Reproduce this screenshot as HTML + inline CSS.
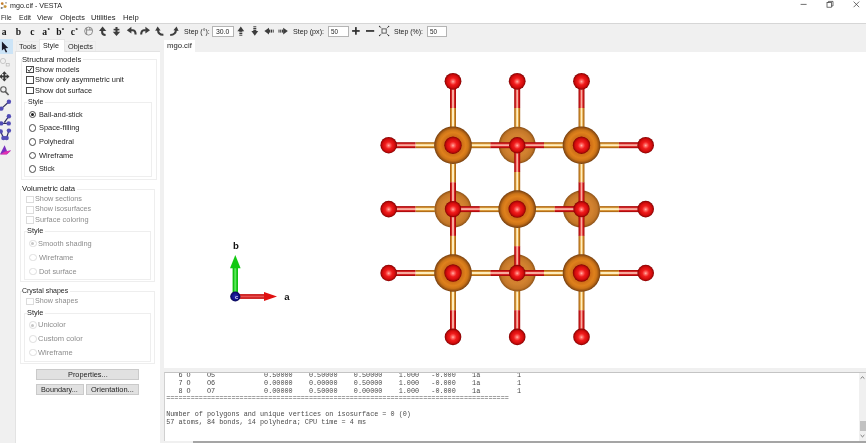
<!DOCTYPE html>
<html><head><meta charset="utf-8"><title>mgo.cif - VESTA</title>
<style>
html,body{margin:0;padding:0;background:#fff;}
body{width:866px;height:443px;overflow:hidden;position:relative;font-family:"Liberation Sans",sans-serif;}
.a{position:absolute;}
.t{position:absolute;white-space:pre;line-height:1;transform-origin:0 50%;}
.cb{position:absolute;width:5.6px;height:5.6px;border:0.7px solid #4a4a4a;background:#fff;}
.cbd{position:absolute;width:5.6px;height:5.6px;border:0.7px solid #dcdcdc;background:#fff;}
.rb{position:absolute;width:5.6px;height:5.6px;border:0.7px solid #4a4a4a;border-radius:50%;background:#fff;}
.rbd{position:absolute;width:5.6px;height:5.6px;border:0.7px solid #dedede;border-radius:50%;background:#fff;}
.gb{position:absolute;border:1px solid #eeeeee;box-sizing:border-box;}
.btn{position:absolute;box-sizing:border-box;background:#e1e1e1;border:1px solid #cacaca;}
.inp{position:absolute;box-sizing:border-box;background:#fff;border:1px solid #b4b4b4;}
.mono{position:absolute;white-space:pre;font-family:"Liberation Mono",monospace;font-size:6.8px;line-height:7.76px;color:#4a4a4a;}
</style></head><body>
<div class="a" style="left:0;top:0;width:866px;height:443px;will-change:transform;">
<!-- window chrome -->
<div class="a" style="left:0;top:0;width:866px;height:443px;background:#f0f0f0;"></div>
<div class="a" style="left:0;top:0;width:866px;height:23px;background:#fff;"></div>
<div class="a" style="left:0;top:23px;width:866px;height:1px;background:#d6d6d6;"></div>
<!-- left tool strip highlight -->
<div class="a" style="left:0;top:39.2px;width:12.8px;height:14.8px;background:#cce4f7;"></div>
<!-- side panel -->
<div class="a" style="left:14.5px;top:51px;width:145.5px;height:392px;background:#fff;border-left:1px solid #e3e3e3;border-top:1px solid #e3e3e3;box-sizing:border-box;"></div>
<div class="a" style="left:38.8px;top:39.2px;width:26.4px;height:12.8px;background:#fff;border:1px solid #e6e6e6;border-bottom:none;box-sizing:border-box;"></div>
<div class="a" style="left:15.5px;top:41px;width:24px;height:10px;border:1px solid #ebebeb;border-bottom:none;border-right:none;box-sizing:border-box;"></div>
<div class="a" style="left:65px;top:41px;width:30.5px;height:10px;border:1px solid #ebebeb;border-bottom:none;border-left:none;box-sizing:border-box;"></div>
<!-- group boxes -->
<div class="gb" style="left:20.5px;top:59px;width:136.5px;height:120.5px;"></div>
<div class="gb" style="left:24px;top:101.5px;width:128px;height:75.5px;"></div>
<div class="gb" style="left:20px;top:188.5px;width:134.5px;height:93.5px;"></div>
<div class="gb" style="left:23.5px;top:230.5px;width:127.5px;height:49px;"></div>
<div class="gb" style="left:20px;top:291px;width:134.5px;height:73px;"></div>
<div class="gb" style="left:23.5px;top:312.5px;width:127.5px;height:49px;"></div>
<!-- label backgrounds to break group borders -->
<div class="a" style="left:21.5px;top:55px;width:61px;height:8px;background:#fff;"></div>
<div class="a" style="left:26.5px;top:98px;width:18px;height:8px;background:#fff;"></div>
<div class="a" style="left:21.5px;top:184px;width:55px;height:8px;background:#fff;"></div>
<div class="a" style="left:26.5px;top:227px;width:18px;height:8px;background:#fff;"></div>
<div class="a" style="left:21.5px;top:287px;width:48px;height:8px;background:#fff;"></div>
<div class="a" style="left:26.5px;top:309px;width:18px;height:8px;background:#fff;"></div>
<!-- checkboxes -->
<div class="cb" style="left:26.3px;top:65.8px;"></div>
<div class="cb" style="left:26.3px;top:76.4px;"></div>
<div class="cb" style="left:26.3px;top:86.8px;"></div>
<div class="cbd" style="left:26.3px;top:195.6px;"></div>
<div class="cbd" style="left:26.3px;top:206px;"></div>
<div class="cbd" style="left:26.3px;top:216.2px;"></div>
<div class="cbd" style="left:26.3px;top:297.6px;"></div>
<!-- radios -->
<div class="rb" style="left:28.8px;top:110.9px;"></div>
<div class="rb" style="left:28.8px;top:124.1px;"></div>
<div class="rb" style="left:28.8px;top:138px;"></div>
<div class="rb" style="left:28.8px;top:151.7px;"></div>
<div class="rb" style="left:28.8px;top:165.2px;"></div>
<div class="a" style="left:30.8px;top:112.9px;width:3.6px;height:3.6px;border-radius:50%;background:#1c1c1c;"></div>
<div class="rbd" style="left:29px;top:239.8px;"></div>
<div class="rbd" style="left:29px;top:253.7px;"></div>
<div class="rbd" style="left:29px;top:267.7px;"></div>
<div class="a" style="left:31.2px;top:242px;width:3.2px;height:3.2px;border-radius:50%;background:#c6c6c6;"></div>
<div class="rbd" style="left:29px;top:321.3px;"></div>
<div class="rbd" style="left:29px;top:335.2px;"></div>
<div class="rbd" style="left:29px;top:348.7px;"></div>
<div class="a" style="left:31.2px;top:323.5px;width:3.2px;height:3.2px;border-radius:50%;background:#c6c6c6;"></div>
<!-- buttons -->
<div class="btn" style="left:36.4px;top:368.5px;width:102.4px;height:11.4px;"></div>
<div class="btn" style="left:36.4px;top:383.6px;width:47.4px;height:11.6px;"></div>
<div class="btn" style="left:85.6px;top:383.6px;width:53.2px;height:11.6px;"></div>
<!-- toolbar inputs -->
<div class="inp" style="left:212px;top:25.5px;width:21.5px;height:11.8px;"></div>
<div class="inp" style="left:328px;top:25.5px;width:20.8px;height:11.8px;"></div>
<div class="inp" style="left:426.5px;top:25.5px;width:20.8px;height:11.8px;"></div>
<!-- canvas tab + canvas -->
<div class="a" style="left:163.7px;top:39.8px;width:31.2px;height:12px;background:#fff;"></div>
<div class="a" style="left:163.7px;top:51.5px;width:703px;height:316.4px;background:#fff;"></div>
<!-- text area -->
<div class="a" style="left:164px;top:372.3px;width:702px;height:68.5px;background:#fff;border-top:1px solid #c4c4c4;border-left:1px solid #d0d0d0;box-sizing:border-box;"></div>
<div class="a" style="left:859px;top:373.3px;width:7px;height:67.5px;background:#f0f0f0;"></div>
<div class="a" style="left:859.5px;top:421px;width:6.5px;height:10px;background:#c1c1c1;"></div>
<div class="a" style="left:193px;top:441px;width:673px;height:2px;background:#a5a5a5;"></div>
<div class="mono" style="left:166.2px;top:372.2px;">   6 O    O5            0.50000    0.50000    0.50000    1.000   -0.000    1a         1
   7 O    O6            0.00000    0.00000    0.50000    1.000   -0.000    1a         1
   8 O    O7            0.00000    0.50000    0.00000    1.000   -0.000    1a         1
====================================================================================

Number of polygons and unique vertices on isosurface = 0 (0)
57 atoms, 84 bonds, 14 polyhedra; CPU time = 4 ms</div>
<!-- cover top half of first row (scrolled) -->
<div class="a" style="left:165.5px;top:368px;width:693px;height:4.3px;background:#f0f0f0;"></div>
<div class="a" style="left:164.5px;top:372.3px;width:694.5px;height:0.8px;background:#c4c4c4;"></div>
<span class="t" style="left:9.6px;top:1.9px;font-size:7.6px;color:#1c1c1c;font-family:'Liberation Sans', sans-serif;font-weight:normal;transform:scaleX(0.9377)">mgo.cif - VESTA</span>
<span class="t" style="left:0.8px;top:14.0px;font-size:7.6px;color:#1c1c1c;font-family:'Liberation Sans', sans-serif;font-weight:normal;transform:scaleX(0.8653)">File</span>
<span class="t" style="left:18.5px;top:14.0px;font-size:7.6px;color:#1c1c1c;font-family:'Liberation Sans', sans-serif;font-weight:normal;transform:scaleX(0.9165)">Edit</span>
<span class="t" style="left:37.3px;top:14.0px;font-size:7.6px;color:#1c1c1c;font-family:'Liberation Sans', sans-serif;font-weight:normal;transform:scaleX(0.9493)">View</span>
<span class="t" style="left:59.7px;top:14.0px;font-size:7.6px;color:#1c1c1c;font-family:'Liberation Sans', sans-serif;font-weight:normal;transform:scaleX(0.9631)">Objects</span>
<span class="t" style="left:91.4px;top:14.0px;font-size:7.6px;color:#1c1c1c;font-family:'Liberation Sans', sans-serif;font-weight:normal;transform:scaleX(1.0047)">Utilities</span>
<span class="t" style="left:122.9px;top:14.0px;font-size:7.6px;color:#1c1c1c;font-family:'Liberation Sans', sans-serif;font-weight:normal;transform:scaleX(1.0048)">Help</span>
<span class="t" style="left:183.6px;top:27.5px;font-size:7.6px;color:#1c1c1c;font-family:'Liberation Sans', sans-serif;font-weight:normal;transform:scaleX(0.9235)">Step (°):</span>
<span class="t" style="left:215.6px;top:27.5px;font-size:7.6px;color:#1c1c1c;font-family:'Liberation Sans', sans-serif;font-weight:normal;transform:scaleX(0.9066)">30.0</span>
<span class="t" style="left:293.0px;top:27.5px;font-size:7.6px;color:#1c1c1c;font-family:'Liberation Sans', sans-serif;font-weight:normal;transform:scaleX(0.9416)">Step (px):</span>
<span class="t" style="left:331.0px;top:27.5px;font-size:7.6px;color:#1c1c1c;font-family:'Liberation Sans', sans-serif;font-weight:normal;transform:scaleX(0.8281)">50</span>
<span class="t" style="left:394.3px;top:27.5px;font-size:7.6px;color:#1c1c1c;font-family:'Liberation Sans', sans-serif;font-weight:normal;transform:scaleX(0.9161)">Step (%):</span>
<span class="t" style="left:429.7px;top:27.5px;font-size:7.6px;color:#1c1c1c;font-family:'Liberation Sans', sans-serif;font-weight:normal;transform:scaleX(0.8281)">50</span>
<span class="t" style="left:166.6px;top:41.9px;font-size:7.6px;color:#1c1c1c;font-family:'Liberation Sans', sans-serif;font-weight:normal;transform:scaleX(1.0129)">mgo.cif</span>
<span class="t" style="left:18.5px;top:42.5px;font-size:7.6px;color:#1c1c1c;font-family:'Liberation Sans', sans-serif;font-weight:normal;transform:scaleX(0.9755)">Tools</span>
<span class="t" style="left:42.7px;top:41.8px;font-size:7.6px;color:#1c1c1c;font-family:'Liberation Sans', sans-serif;font-weight:normal;transform:scaleX(0.9414)">Style</span>
<span class="t" style="left:67.6px;top:42.5px;font-size:7.6px;color:#1c1c1c;font-family:'Liberation Sans', sans-serif;font-weight:normal;transform:scaleX(0.9631)">Objects</span>
<span class="t" style="left:22.4px;top:55.5px;font-size:7.6px;color:#1c1c1c;font-family:'Liberation Sans', sans-serif;font-weight:normal;transform:scaleX(1.0018)">Structural models</span>
<span class="t" style="left:35.0px;top:65.5px;font-size:7.6px;color:#1c1c1c;font-family:'Liberation Sans', sans-serif;font-weight:normal;transform:scaleX(0.9738)">Show models</span>
<span class="t" style="left:35.0px;top:76.2px;font-size:7.6px;color:#1c1c1c;font-family:'Liberation Sans', sans-serif;font-weight:normal;transform:scaleX(0.9831)">Show only asymmetric unit</span>
<span class="t" style="left:35.0px;top:86.5px;font-size:7.6px;color:#1c1c1c;font-family:'Liberation Sans', sans-serif;font-weight:normal;transform:scaleX(0.9712)">Show dot surface</span>
<span class="t" style="left:27.8px;top:97.8px;font-size:7.6px;color:#1c1c1c;font-family:'Liberation Sans', sans-serif;font-weight:normal;transform:scaleX(0.9177)">Style</span>
<span class="t" style="left:38.6px;top:110.6px;font-size:7.6px;color:#1c1c1c;font-family:'Liberation Sans', sans-serif;font-weight:normal;transform:scaleX(0.9588)">Ball-and-stick</span>
<span class="t" style="left:38.6px;top:124.3px;font-size:7.6px;color:#1c1c1c;font-family:'Liberation Sans', sans-serif;font-weight:normal;transform:scaleX(0.9764)">Space-filling</span>
<span class="t" style="left:38.6px;top:137.7px;font-size:7.6px;color:#1c1c1c;font-family:'Liberation Sans', sans-serif;font-weight:normal;transform:scaleX(0.9724)">Polyhedral</span>
<span class="t" style="left:38.6px;top:152.1px;font-size:7.6px;color:#1c1c1c;font-family:'Liberation Sans', sans-serif;font-weight:normal;transform:scaleX(0.9820)">Wireframe</span>
<span class="t" style="left:38.6px;top:165.4px;font-size:7.6px;color:#1c1c1c;font-family:'Liberation Sans', sans-serif;font-weight:normal;transform:scaleX(0.9533)">Stick</span>
<span class="t" style="left:22.4px;top:185.1px;font-size:7.6px;color:#1c1c1c;font-family:'Liberation Sans', sans-serif;font-weight:normal;transform:scaleX(1.0144)">Volumetric data</span>
<span class="t" style="left:35.0px;top:195.3px;font-size:7.6px;color:#8c8c8c;font-family:'Liberation Sans', sans-serif;font-weight:normal;transform:scaleX(0.9598)">Show sections</span>
<span class="t" style="left:35.0px;top:205.3px;font-size:7.6px;color:#8c8c8c;font-family:'Liberation Sans', sans-serif;font-weight:normal;transform:scaleX(0.9409)">Show isosurfaces</span>
<span class="t" style="left:35.0px;top:216.0px;font-size:7.6px;color:#8c8c8c;font-family:'Liberation Sans', sans-serif;font-weight:normal;transform:scaleX(0.9749)">Surface coloring</span>
<span class="t" style="left:27.3px;top:227.3px;font-size:7.6px;color:#1c1c1c;font-family:'Liberation Sans', sans-serif;font-weight:normal;transform:scaleX(0.9710)">Style</span>
<span class="t" style="left:38.3px;top:240.0px;font-size:7.6px;color:#8c8c8c;font-family:'Liberation Sans', sans-serif;font-weight:normal;transform:scaleX(0.9783)">Smooth shading</span>
<span class="t" style="left:38.5px;top:254.3px;font-size:7.6px;color:#8c8c8c;font-family:'Liberation Sans', sans-serif;font-weight:normal;transform:scaleX(0.9848)">Wireframe</span>
<span class="t" style="left:38.5px;top:268.1px;font-size:7.6px;color:#8c8c8c;font-family:'Liberation Sans', sans-serif;font-weight:normal;transform:scaleX(0.9654)">Dot surface</span>
<span class="t" style="left:22.4px;top:287.0px;font-size:7.6px;color:#1c1c1c;font-family:'Liberation Sans', sans-serif;font-weight:normal;transform:scaleX(0.9197)">Crystal shapes</span>
<span class="t" style="left:35.0px;top:297.1px;font-size:7.6px;color:#8c8c8c;font-family:'Liberation Sans', sans-serif;font-weight:normal;transform:scaleX(0.9431)">Show shapes</span>
<span class="t" style="left:27.3px;top:308.6px;font-size:7.6px;color:#1c1c1c;font-family:'Liberation Sans', sans-serif;font-weight:normal;transform:scaleX(0.9710)">Style</span>
<span class="t" style="left:38.3px;top:321.4px;font-size:7.6px;color:#8c8c8c;font-family:'Liberation Sans', sans-serif;font-weight:normal;transform:scaleX(0.9943)">Unicolor</span>
<span class="t" style="left:38.3px;top:335.3px;font-size:7.6px;color:#8c8c8c;font-family:'Liberation Sans', sans-serif;font-weight:normal;transform:scaleX(0.9992)">Custom color</span>
<span class="t" style="left:38.3px;top:348.9px;font-size:7.6px;color:#8c8c8c;font-family:'Liberation Sans', sans-serif;font-weight:normal;transform:scaleX(0.9905)">Wireframe</span>
<span class="t" style="left:67.6px;top:370.5px;font-size:7.6px;color:#1c1c1c;font-family:'Liberation Sans', sans-serif;font-weight:normal;transform:scaleX(0.9694)">Properties...</span>
<span class="t" style="left:41.4px;top:386.0px;font-size:7.6px;color:#1c1c1c;font-family:'Liberation Sans', sans-serif;font-weight:normal;transform:scaleX(0.9613)">Boundary...</span>
<span class="t" style="left:90.7px;top:386.0px;font-size:7.6px;color:#1c1c1c;font-family:'Liberation Sans', sans-serif;font-weight:normal;transform:scaleX(0.9843)">Orientation...</span>
<svg class="a" style="left:0;top:0" width="866" height="443" viewBox="0 0 866 443">
<defs>
<radialGradient id="gMg" cx="50%" cy="50%" r="50%">
<stop offset="0" stop-color="#c8661a"/><stop offset="0.5" stop-color="#d07018"/><stop offset="0.68" stop-color="#df811c"/><stop offset="0.82" stop-color="#cc7418"/><stop offset="0.93" stop-color="#9a5412"/><stop offset="1" stop-color="#6e3a0c"/></radialGradient>
<radialGradient id="gMgB" cx="50%" cy="50%" r="50%">
<stop offset="0" stop-color="#d07e2c"/><stop offset="0.6" stop-color="#d28230"/><stop offset="0.85" stop-color="#c27628"/><stop offset="0.95" stop-color="#a05e1c"/><stop offset="1" stop-color="#86501a"/></radialGradient>
<radialGradient id="gO" cx="50%" cy="50%" r="50%" fx="50%" fy="52%">
<stop offset="0" stop-color="#ffb4aa"/><stop offset="0.16" stop-color="#ff6c66"/><stop offset="0.42" stop-color="#f01c1c"/><stop offset="0.7" stop-color="#d80e0e"/><stop offset="0.86" stop-color="#b40707"/><stop offset="1" stop-color="#780000"/></radialGradient>
<linearGradient id="gAuH" x1="0" y1="0" x2="0" y2="1">
<stop offset="0" stop-color="#a8661a"/><stop offset="0.14" stop-color="#b87218"/><stop offset="0.3" stop-color="#e2a445"/><stop offset="0.42" stop-color="#fff0c2"/><stop offset="0.58" stop-color="#fff0c2"/><stop offset="0.7" stop-color="#e2a445"/><stop offset="0.86" stop-color="#b87218"/><stop offset="1" stop-color="#a8661a"/></linearGradient>
<linearGradient id="gAuV" x1="0" y1="0" x2="1" y2="0">
<stop offset="0" stop-color="#a8661a"/><stop offset="0.14" stop-color="#b87218"/><stop offset="0.3" stop-color="#e2a445"/><stop offset="0.42" stop-color="#fff0c2"/><stop offset="0.58" stop-color="#fff0c2"/><stop offset="0.7" stop-color="#e2a445"/><stop offset="0.86" stop-color="#b87218"/><stop offset="1" stop-color="#a8661a"/></linearGradient>
<linearGradient id="gRH" x1="0" y1="0" x2="0" y2="1">
<stop offset="0" stop-color="#a00808"/><stop offset="0.14" stop-color="#b80e0e"/><stop offset="0.3" stop-color="#e03030"/><stop offset="0.42" stop-color="#f8aea2"/><stop offset="0.58" stop-color="#f8aea2"/><stop offset="0.7" stop-color="#e03030"/><stop offset="0.86" stop-color="#b80e0e"/><stop offset="1" stop-color="#a00808"/></linearGradient>
<linearGradient id="gRV" x1="0" y1="0" x2="1" y2="0">
<stop offset="0" stop-color="#a00808"/><stop offset="0.14" stop-color="#b80e0e"/><stop offset="0.3" stop-color="#e03030"/><stop offset="0.42" stop-color="#f8aea2"/><stop offset="0.58" stop-color="#f8aea2"/><stop offset="0.7" stop-color="#e03030"/><stop offset="0.86" stop-color="#b80e0e"/><stop offset="1" stop-color="#a00808"/></linearGradient>
<radialGradient id="gC" cx="50%" cy="50%" r="50%"><stop offset="0" stop-color="#2a2ab0"/><stop offset="0.6" stop-color="#14148a"/><stop offset="1" stop-color="#070750"/></radialGradient>
</defs>
<rect x="415.5" y="142.2" width="19.4" height="6.0" fill="url(#gAuH)"/>
<rect x="395.7" y="142.2" width="19.8" height="6.0" fill="url(#gRH)"/>
<rect x="450.0" y="107.9" width="6.0" height="19.2" fill="url(#gAuV)"/>
<rect x="450.0" y="88.3" width="6.0" height="19.7" fill="url(#gRV)"/>
<rect x="415.5" y="206.1" width="19.4" height="6.0" fill="url(#gAuH)"/>
<rect x="395.7" y="206.1" width="19.8" height="6.0" fill="url(#gRH)"/>
<rect x="415.5" y="270.0" width="19.4" height="6.0" fill="url(#gAuH)"/>
<rect x="395.7" y="270.0" width="19.8" height="6.0" fill="url(#gRH)"/>
<rect x="450.0" y="291.0" width="6.0" height="19.2" fill="url(#gAuV)"/>
<rect x="450.0" y="310.2" width="6.0" height="19.6" fill="url(#gRV)"/>
<rect x="514.2" y="107.9" width="6.0" height="19.2" fill="url(#gAuV)"/>
<rect x="514.2" y="88.3" width="6.0" height="19.7" fill="url(#gRV)"/>
<rect x="514.2" y="291.0" width="6.0" height="19.2" fill="url(#gAuV)"/>
<rect x="514.2" y="310.2" width="6.0" height="19.6" fill="url(#gRV)"/>
<rect x="599.5" y="142.2" width="19.4" height="6.0" fill="url(#gAuH)"/>
<rect x="618.9" y="142.2" width="19.8" height="6.0" fill="url(#gRH)"/>
<rect x="578.5" y="107.9" width="6.0" height="19.2" fill="url(#gAuV)"/>
<rect x="578.5" y="88.3" width="6.0" height="19.7" fill="url(#gRV)"/>
<rect x="599.5" y="206.1" width="19.4" height="6.0" fill="url(#gAuH)"/>
<rect x="618.9" y="206.1" width="19.8" height="6.0" fill="url(#gRH)"/>
<rect x="599.5" y="270.0" width="19.4" height="6.0" fill="url(#gAuH)"/>
<rect x="618.9" y="270.0" width="19.8" height="6.0" fill="url(#gRH)"/>
<rect x="578.5" y="291.0" width="6.0" height="19.2" fill="url(#gAuV)"/>
<rect x="578.5" y="310.2" width="6.0" height="19.6" fill="url(#gRV)"/>
<circle cx="453.0" cy="209.1" r="18.5" fill="url(#gMgB)"/>
<circle cx="517.2" cy="145.2" r="18.5" fill="url(#gMgB)"/>
<circle cx="517.2" cy="273.0" r="18.5" fill="url(#gMgB)"/>
<circle cx="581.5" cy="209.1" r="18.5" fill="url(#gMgB)"/>
<rect x="479.6" y="206.1" width="19.6" height="6.0" fill="url(#gAuH)"/>
<rect x="453.0" y="206.1" width="26.8" height="6.0" fill="url(#gRH)"/>
<rect x="450.0" y="235.7" width="6.0" height="19.3" fill="url(#gAuV)"/>
<rect x="450.0" y="209.1" width="6.0" height="26.8" fill="url(#gRV)"/>
<rect x="450.0" y="163.2" width="6.0" height="19.3" fill="url(#gAuV)"/>
<rect x="450.0" y="182.3" width="6.0" height="26.8" fill="url(#gRV)"/>
<rect x="543.8" y="142.2" width="19.6" height="6.0" fill="url(#gAuH)"/>
<rect x="517.2" y="142.2" width="26.8" height="6.0" fill="url(#gRH)"/>
<rect x="471.0" y="142.2" width="19.6" height="6.0" fill="url(#gAuH)"/>
<rect x="490.4" y="142.2" width="26.8" height="6.0" fill="url(#gRH)"/>
<rect x="514.2" y="171.8" width="6.0" height="19.3" fill="url(#gAuV)"/>
<rect x="514.2" y="145.2" width="6.0" height="26.8" fill="url(#gRV)"/>
<rect x="543.8" y="270.0" width="19.6" height="6.0" fill="url(#gAuH)"/>
<rect x="517.2" y="270.0" width="26.8" height="6.0" fill="url(#gRH)"/>
<rect x="471.0" y="270.0" width="19.6" height="6.0" fill="url(#gAuH)"/>
<rect x="490.4" y="270.0" width="26.8" height="6.0" fill="url(#gRH)"/>
<rect x="514.2" y="227.1" width="6.0" height="19.3" fill="url(#gAuV)"/>
<rect x="514.2" y="246.2" width="6.0" height="26.8" fill="url(#gRV)"/>
<rect x="535.2" y="206.1" width="19.6" height="6.0" fill="url(#gAuH)"/>
<rect x="554.7" y="206.1" width="26.8" height="6.0" fill="url(#gRH)"/>
<rect x="578.5" y="235.7" width="6.0" height="19.3" fill="url(#gAuV)"/>
<rect x="578.5" y="209.1" width="6.0" height="26.8" fill="url(#gRV)"/>
<rect x="578.5" y="163.2" width="6.0" height="19.3" fill="url(#gAuV)"/>
<rect x="578.5" y="182.3" width="6.0" height="26.8" fill="url(#gRV)"/>
<circle cx="453.0" cy="145.2" r="18.8" fill="url(#gMg)"/>
<circle cx="453.0" cy="273.0" r="18.8" fill="url(#gMg)"/>
<circle cx="517.2" cy="209.1" r="18.8" fill="url(#gMg)"/>
<circle cx="581.5" cy="145.2" r="18.8" fill="url(#gMg)"/>
<circle cx="581.5" cy="273.0" r="18.8" fill="url(#gMg)"/>
<circle cx="453.0" cy="145.2" r="8.7" fill="url(#gO)"/>
<circle cx="453.0" cy="209.1" r="8.2" fill="url(#gO)"/>
<circle cx="453.0" cy="273.0" r="8.7" fill="url(#gO)"/>
<circle cx="517.2" cy="145.2" r="8.2" fill="url(#gO)"/>
<circle cx="517.2" cy="209.1" r="8.7" fill="url(#gO)"/>
<circle cx="517.2" cy="273.0" r="8.2" fill="url(#gO)"/>
<circle cx="581.5" cy="145.2" r="8.7" fill="url(#gO)"/>
<circle cx="581.5" cy="209.1" r="8.2" fill="url(#gO)"/>
<circle cx="581.5" cy="273.0" r="8.7" fill="url(#gO)"/>
<circle cx="388.7" cy="145.2" r="8.3" fill="url(#gO)"/>
<circle cx="645.7" cy="145.2" r="8.3" fill="url(#gO)"/>
<circle cx="453.0" cy="81.3" r="8.4" fill="url(#gO)"/>
<circle cx="453.0" cy="336.9" r="8.3" fill="url(#gO)"/>
<circle cx="388.7" cy="209.1" r="8.3" fill="url(#gO)"/>
<circle cx="645.7" cy="209.1" r="8.3" fill="url(#gO)"/>
<circle cx="517.2" cy="81.3" r="8.4" fill="url(#gO)"/>
<circle cx="517.2" cy="336.9" r="8.3" fill="url(#gO)"/>
<circle cx="388.7" cy="273.0" r="8.3" fill="url(#gO)"/>
<circle cx="645.7" cy="273.0" r="8.3" fill="url(#gO)"/>
<circle cx="581.5" cy="81.3" r="8.4" fill="url(#gO)"/>
<circle cx="581.5" cy="336.9" r="8.3" fill="url(#gO)"/>
<rect x="232.6" y="267.5" width="5.4" height="26" fill="#10c010"/>
<rect x="234.3" y="267.5" width="2" height="26" fill="#58e858"/>
<polygon points="235.3,255 240.6,268.2 230,268.2" fill="#12c812"/>
<rect x="238" y="294.1" width="26.5" height="4.8" fill="#c81414"/>
<rect x="238" y="295.6" width="26.5" height="1.8" fill="#e85050"/>
<polygon points="277,296.5 264,292 264,301" fill="#e01010"/>
<circle cx="235.3" cy="296.5" r="5.1" fill="url(#gC)"/>
<text x="235.9" y="249.3" font-family="Liberation Sans, sans-serif" font-weight="bold" font-size="9.6" text-anchor="middle" fill="#111">b</text>
<text x="286.9" y="299.6" font-family="Liberation Sans, sans-serif" font-weight="bold" font-size="9.6" text-anchor="middle" fill="#111">a</text>
<text x="236.6" y="298.6" font-family="Liberation Sans, sans-serif" font-weight="bold" font-size="5.5" text-anchor="middle" fill="#e8e8ff">c</text>
<!-- window controls -->
<g stroke="#333" stroke-width="0.7" fill="none">
<line x1="800.6" y1="4.4" x2="806.6" y2="4.4"/>
<rect x="827" y="2.6" width="4.6" height="4.6"/>
<path d="M828.4 2.6 V1.4 H833 V6 H831.6"/>
<path d="M853.6 1.6 L859.2 7.2 M859.2 1.6 L853.6 7.2"/>
</g>
<!-- title icon -->
<g>
<circle cx="2.2" cy="3.6" r="1.3" fill="#c87a1e"/><circle cx="5.2" cy="6.6" r="1.4" fill="#d8951e"/><circle cx="1.6" cy="8" r="1" fill="#777"/><circle cx="6" cy="2.8" r="0.9" fill="#999"/>
<path d="M2.2 3.6 L5.2 6.6 L1.6 8" stroke="#888" stroke-width="0.5" fill="none"/>
</g>
<!-- toolbar letters -->
<g font-family="Liberation Serif, serif" font-weight="bold" font-size="9.6" fill="#151515" text-anchor="middle">
<text x="4.1" y="34.5">a</text>
<text x="18.3" y="34.5">b</text>
<text x="32.4" y="34.5">c</text>
<text x="44.7" y="34.5">a</text>
<text x="58.9" y="34.5">b</text>
<text x="73" y="34.5">c</text>
</g>
<g font-family="Liberation Sans, sans-serif" font-weight="bold" font-size="6" fill="#111" text-anchor="middle">
<text x="48.7" y="32.2">*</text>
<text x="62.9" y="32.2">*</text>
<text x="76.6" y="32.2">*</text>
</g>
<!-- sphere icon -->
<g stroke="#777" stroke-width="0.8" fill="none">
<circle cx="88.6" cy="31.1" r="4"/>
<path d="M86.6 27.8 V34.6 M86.6 30 H92.4 M89.8 30 V27.3"/>
</g>
<!-- rotate arrows -->
<g fill="#3d3d3d" stroke="none">
<polygon points="102.6,26.6 106.3,31 99,31"/>
<polygon points="116.5,36 112.8,31.8 120.2,31.8"/>
<polygon points="126.8,30.2 131.4,26.8 131.4,33.6"/>
<polygon points="150,30.2 145.4,26.8 145.4,33.6"/>
<polygon points="157.6,26.4 160.6,30.4 155.2,30.8"/>
<polygon points="176.6,26.4 178.6,31 173.4,30.2"/>
</g>
<g stroke="#3d3d3d" fill="none" stroke-width="2.1" stroke-linecap="butt">
<path d="M102.2 30.6 V32.6 Q102.2 35 105.6 35"/>
<path d="M116.5 32 V27"/>
<path d="M113.6 29.6 H119.4" stroke-width="1.6"/>
<path d="M131 30.2 H133 Q135.6 30.4 135.6 34.6"/>
<path d="M145.8 30.2 H143.8 Q141.2 30.4 141.2 34.6"/>
<path d="M158 30 Q158.2 35 163.4 34.8"/>
<path d="M176 30 Q175.6 34.8 170.2 35"/>
</g>
<!-- step arrows with dashed tails -->
<g fill="#3d3d3d">
<polygon points="240.8,26.5 244.2,31.2 237.4,31.2"/>
<rect x="239.3" y="31.2" width="3" height="1.2"/><rect x="239.3" y="33" width="3" height="1"/><rect x="239.3" y="34.7" width="3" height="1"/>
<polygon points="254.8,35.8 258.2,31 251.4,31"/>
<rect x="253.3" y="29.6" width="3" height="1.4"/><rect x="253.3" y="28" width="3" height="1"/><rect x="253.3" y="26.3" width="3" height="1"/>
<polygon points="264.4,31.1 269,27.7 269,34.5"/>
<rect x="269" y="29.6" width="1.4" height="3"/><rect x="271" y="29.6" width="1" height="3"/><rect x="272.7" y="29.6" width="1" height="3"/>
<polygon points="287.8,31.1 283.2,27.7 283.2,34.5"/>
<rect x="281.8" y="29.6" width="1.4" height="3"/><rect x="280.2" y="29.6" width="1" height="3"/><rect x="278.5" y="29.6" width="1" height="3"/>
</g>
<!-- plus minus fit -->
<g fill="#2e2e2e">
<rect x="352.1" y="30.1" width="7.6" height="1.7"/><rect x="355.05" y="27.1" width="1.7" height="7.6"/>
<rect x="366" y="30.1" width="8.2" height="1.7"/>
</g>
<g stroke="#3a3a3a" fill="none" stroke-width="0.8">
<rect x="382" y="28.9" width="4.2" height="4.2" fill="#f4f4f4"/>
<path d="M379.8 26.6 L381.4 28.2 M388.4 26.6 L386.8 28.2 M379.8 35.4 L381.4 33.8 M388.4 35.4 L386.8 33.8" stroke-width="0.7"/>
</g>
<g fill="#3a3a3a"><circle cx="379.6" cy="26.5" r="0.7"/><circle cx="388.6" cy="26.5" r="0.7"/><circle cx="379.6" cy="35.5" r="0.7"/><circle cx="388.6" cy="35.5" r="0.7"/></g>
<!-- left tool strip -->
<polygon points="1.9,41.4 1.9,50.6 4,48.8 5.8,52.6 7.2,52 5.5,48.2 8.2,48" fill="#1a1a2a"/>
<g stroke="#b8b8b8" fill="none" stroke-width="0.7">
<circle cx="3" cy="61" r="2.6"/><rect x="6.2" y="63.4" width="3" height="2.6"/>
</g>
<g fill="#3a3a3a">
<rect x="3.45" y="72.6" width="1.8" height="7.6"/><rect x="0.6" y="75.55" width="7.6" height="1.8"/>
<polygon points="4.35,71.2 6.8,74 1.9,74"/><polygon points="4.35,81.6 6.8,78.8 1.9,78.8"/>
<polygon points="-0.8,76.45 2,74 2,78.9"/><polygon points="9.5,76.45 6.7,74 6.7,78.9"/>
</g>
<g stroke="#5a5a5a" fill="none">
<circle cx="3.4" cy="89.4" r="2.7" stroke-width="1.1"/>
<path d="M5.4 91.6 L8.6 95" stroke-width="1.6"/>
</g>
<g stroke="#2c2c5c" stroke-width="1.2" fill="none">
<path d="M1.4 108.6 L8.9 101.8"/>
<path d="M8.9 116.2 L4.4 122.4 M1.2 123.4 H8.7"/>
<path d="M0.7 131.4 L3.4 138 H6.6 L8.9 130.6"/>
</g>
<g fill="#524cb6">
<circle cx="8.9" cy="101.8" r="2.2"/><circle cx="1.4" cy="108.6" r="2.2"/>
<circle cx="8.9" cy="116.2" r="2.2"/><circle cx="1.2" cy="123.4" r="2.2"/><circle cx="8.7" cy="123.4" r="2.2"/>
<circle cx="0.7" cy="131.4" r="2.2"/><circle cx="8.9" cy="130.6" r="2.2"/><circle cx="3.4" cy="138" r="2.2"/><circle cx="6.6" cy="138" r="2.2"/>
</g>
<polygon points="0,154.2 4.6,145.2 7,151 11,150.4 7,154.2" fill="#7a30c0"/>
<polygon points="0,154.4 5,151.6 11,150.6 6.6,154.6" fill="#e030b0"/>
<!-- checkbox tick -->
<path d="M27.6 69.6 L29.2 71.4 L32 67.4" stroke="#222" stroke-width="0.9" fill="none"/>
<!-- scrollbar arrows -->
<g stroke="#555" stroke-width="0.8" fill="none">
<path d="M860.6 378.6 L862.5 376.8 L864.4 378.6"/>
<path d="M860.6 435 L862.5 436.8 L864.4 435"/>
</g>

</svg>
</div>
</body></html>
